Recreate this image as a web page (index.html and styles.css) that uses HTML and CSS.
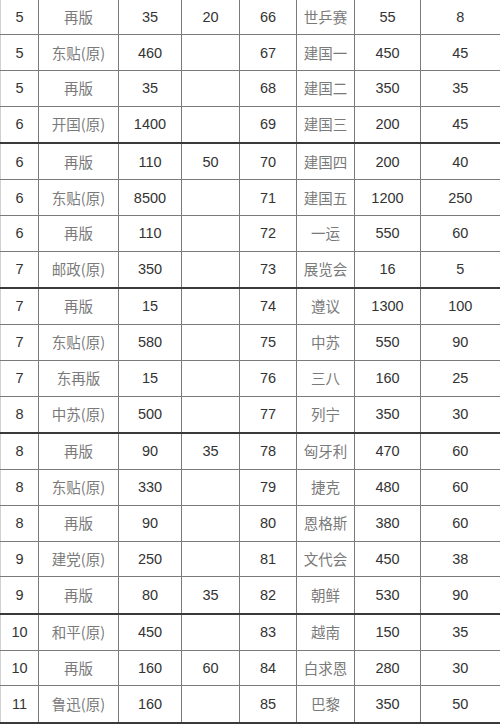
FILE: index.html
```html
<!DOCTYPE html>
<html lang="zh">
<head>
<meta charset="utf-8">
<title>邮票价格表</title>
<link rel="stylesheet" href="styles.css">
</head>
<body>
<table class="sheet">
<colgroup>
<col class="c1"><col class="c2"><col class="c3"><col class="c4"><col class="c5"><col class="c6"><col class="c7"><col class="c8">
</colgroup>
<tbody>
<tr><td>5</td><td class="zh">再版</td><td>35</td><td>20</td><td>66</td><td class="zh">世乒赛</td><td>55</td><td>8</td></tr>
<tr><td>5</td><td class="zh">东贴(原)</td><td>460</td><td></td><td>67</td><td class="zh">建国一</td><td>450</td><td>45</td></tr>
<tr><td>5</td><td class="zh">再版</td><td>35</td><td></td><td>68</td><td class="zh">建国二</td><td>350</td><td>35</td></tr>
<tr><td>6</td><td class="zh">开国(原)</td><td>1400</td><td></td><td>69</td><td class="zh">建国三</td><td>200</td><td>45</td></tr>
<tr class="dark"><td>6</td><td class="zh">再版</td><td>110</td><td>50</td><td>70</td><td class="zh">建国四</td><td>200</td><td>40</td></tr>
<tr><td>6</td><td class="zh">东贴(原)</td><td>8500</td><td></td><td>71</td><td class="zh">建国五</td><td>1200</td><td>250</td></tr>
<tr><td>6</td><td class="zh">再版</td><td>110</td><td></td><td>72</td><td class="zh">一运</td><td>550</td><td>60</td></tr>
<tr><td>7</td><td class="zh">邮政(原)</td><td>350</td><td></td><td>73</td><td class="zh">展览会</td><td>16</td><td>5</td></tr>
<tr class="dark"><td>7</td><td class="zh">再版</td><td>15</td><td></td><td>74</td><td class="zh">遵议</td><td>1300</td><td>100</td></tr>
<tr><td>7</td><td class="zh">东贴(原)</td><td>580</td><td></td><td>75</td><td class="zh">中苏</td><td>550</td><td>90</td></tr>
<tr><td>7</td><td class="zh">东再版</td><td>15</td><td></td><td>76</td><td class="zh">三八</td><td>160</td><td>25</td></tr>
<tr><td>8</td><td class="zh">中苏(原)</td><td>500</td><td></td><td>77</td><td class="zh">列宁</td><td>350</td><td>30</td></tr>
<tr class="dark"><td>8</td><td class="zh">再版</td><td>90</td><td>35</td><td>78</td><td class="zh">匈牙利</td><td>470</td><td>60</td></tr>
<tr><td>8</td><td class="zh">东贴(原)</td><td>330</td><td></td><td>79</td><td class="zh">捷克</td><td>480</td><td>60</td></tr>
<tr><td>8</td><td class="zh">再版</td><td>90</td><td></td><td>80</td><td class="zh">恩格斯</td><td>380</td><td>60</td></tr>
<tr><td>9</td><td class="zh">建党(原)</td><td>250</td><td></td><td>81</td><td class="zh">文代会</td><td>450</td><td>38</td></tr>
<tr><td>9</td><td class="zh">再版</td><td>80</td><td>35</td><td>82</td><td class="zh">朝鲜</td><td>530</td><td>90</td></tr>
<tr class="dark"><td>10</td><td class="zh">和平(原)</td><td>450</td><td></td><td>83</td><td class="zh">越南</td><td>150</td><td>35</td></tr>
<tr><td>10</td><td class="zh">再版</td><td>160</td><td>60</td><td>84</td><td class="zh">白求恩</td><td>280</td><td>30</td></tr>
<tr><td>11</td><td class="zh">鲁迅(原)</td><td>160</td><td></td><td>85</td><td class="zh">巴黎</td><td>350</td><td>50</td></tr>
</tbody>
</table>
</body>
</html>
```
FILE: styles.css
```css
html, body {
  margin: 0;
  padding: 0;
  background: #ffffff;
}

.sheet {
  width: 500px;
  height: 724px;
  table-layout: fixed;
  border-collapse: collapse;
  font-family: "Liberation Sans", Arial, sans-serif;
  font-size: 14.5px;
  line-height: 16px;
  color: #333333;
}

.c1 { width: 38px; }
.c2 { width: 80px; }
.c3 { width: 63px; }
.c4 { width: 58px; }
.c5 { width: 57px; }
.c6 { width: 58px; }
.c7 { width: 66px; }
.c8 { width: 80px; }

.sheet td {
  padding: 0;
  text-align: center;
  vertical-align: middle;
  border-left: 1px solid #7a7a7a;
  border-bottom: 1px solid #7a7a7a;
}

.sheet td:first-child {
  border-left: 1px solid #d0d0d0;
}

.sheet td:last-child {
  border-right: 2px solid #3a3a3a;
}

.sheet tr:last-child td {
  border-bottom: 2px solid #3a3a3a;
}

.sheet tr.dark td {
  border-top: 2px solid #3a3a3a;
}

.sheet td.zh {
  font-family: "Noto Sans CJK SC", "Noto Sans CJK JP", sans-serif;
  font-weight: 400;
  color: #7a7a7a;
  font-size: 14.5px;
}
```
